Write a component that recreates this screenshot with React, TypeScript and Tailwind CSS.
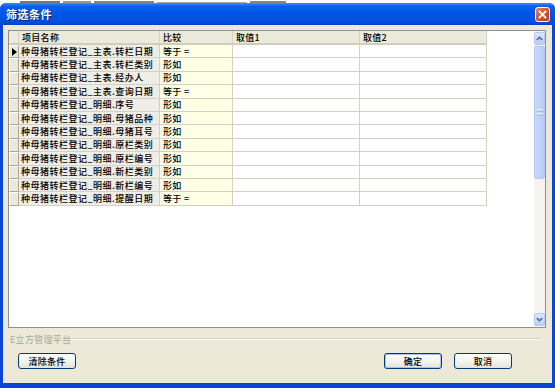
const rows = [
  { name: "种母猪转栏登记_主表.转栏日期", op: "等于 =" },
  { name: "种母猪转栏登记_主表.转栏类别", op: "形如" },
  { name: "种母猪转栏登记_主表.经办人", op: "形如" },
  { name: "种母猪转栏登记_主表.查询日期", op: "等于 =" },
  { name: "种母猪转栏登记_明细.序号", op: "形如" },
  { name: "种母猪转栏登记_明细.母猪品种", op: "形如" },
  { name: "种母猪转栏登记_明细.母猪耳号", op: "形如" },
  { name: "种母猪转栏登记_明细.原栏类别", op: "形如" },
  { name: "种母猪转栏登记_明细.原栏编号", op: "形如" },
  { name: "种母猪转栏登记_明细.新栏类别", op: "形如" },
  { name: "种母猪转栏登记_明细.新栏编号", op: "形如" },
  { name: "种母猪转栏登记_明细.提醒日期", op: "等于 =" },
];

const XpButton = ({ label, primary }: { label: string; primary?: boolean }) => (
  <button
    className={`w-[58px] h-[16px] rounded-[3px] border border-[#003C74] bg-gradient-to-b from-white via-[#f4f4f0] to-[#e3e2da] text-[9px] leading-none font-medium tracking-[0.3px] text-black flex items-center justify-center ${
      primary ? "shadow-[inset_0_0_0_1px_#a9c3f0]" : ""
    }`}
  >
    {label}
  </button>
);

const HeaderCell = ({ label, w }: { label: string; w: string }) => (
  <div
    className={`${w} h-full flex items-center pl-[3px] border-r border-[#d6d2c2] border-b-2 border-b-[#d1cdbd] bg-[#ebeadb] text-[9px] leading-none font-medium tracking-[0.3px]`}
  >
    {label}
  </div>
);

export default function App() {
  return (
    <div className="w-[555px] h-[388px] flex flex-col bg-white font-['Noto_Sans_CJK_SC',sans-serif] text-black overflow-hidden">
      {/* leftover of the window behind */}
      <div className="h-[3px] flex gap-[3px] px-[20px] items-end bg-white">
        <div className="w-[40px] h-[2px] bg-[#777]" />
        <div className="w-[28px] h-[2px] bg-[#999]" />
        <div className="w-[60px] h-[2px] bg-[#888]" />
        <div className="w-[90px] h-[1px] bg-[#aaa]" />
        <div className="w-[36px] h-[2px] bg-[#888]" />
      </div>

      {/* window frame */}
      <div className="flex-1 flex flex-col rounded-t-[6px] bg-[#0a45d6]">
        {/* title bar */}
        <div className="h-[22px] flex items-center justify-between pl-[6px] pr-[5px] rounded-t-[6px] bg-[linear-gradient(to_bottom,#3d8ff8_0%,#0b61ea_14%,#0055e5_45%,#0052e0_80%,#0042cb_100%)]">
          <span className="text-white font-bold text-[11px] leading-none tracking-[0.5px] [text-shadow:1px_1px_0_#0a1f6e]">
            筛选条件
          </span>
          <div className="w-[15px] h-[15px] rounded-[3px] border border-white bg-gradient-to-br from-[#e8825f] via-[#d9502a] to-[#c23a14] flex items-center justify-center">
            <svg width="9" height="9" viewBox="0 0 9 9">
              <path d="M1.5 1.5 L7.5 7.5 M7.5 1.5 L1.5 7.5" stroke="white" strokeWidth="1.8" strokeLinecap="square" />
            </svg>
          </div>
        </div>

        {/* client area */}
        <div className="flex-1 mx-[3px] mb-[5px] bg-[#ece9d8] flex flex-col">
          {/* grid panel */}
          <div className="mt-[5px] ml-[5px] mr-[6px] h-[298px] border border-[#8e8f8f] bg-white flex">
            <div className="flex-1 flex flex-col">
              <div className="h-[14px] flex">
                <div className="w-[10px] h-full bg-[#ebeadb] border-r border-[#d6d2c2] border-b-2 border-b-[#d1cdbd]" />
                <HeaderCell label="项目名称" w="w-[141px]" />
                <HeaderCell label="比较" w="w-[73px]" />
                <HeaderCell label="取值1" w="w-[127px]" />
                <HeaderCell label="取值2" w="w-[127px]" />
              </div>
              {rows.map((r, i) => (
                <div key={i} className="h-[13.4px] flex text-[9px] leading-none font-medium">
                  <div className="w-[10px] h-full bg-[#ece9d8] border-t border-l border-t-white border-l-white border-b border-r border-b-[#aca899] border-r-[#aca899] flex items-center justify-center">
                    {i === 0 && (
                      <svg width="5" height="8" viewBox="0 0 5 8">
                        <path d="M0 0 L5 4 L0 8 Z" fill="black" />
                      </svg>
                    )}
                  </div>
                  <div className="w-[141px] h-full bg-[#eeede6] border-r border-b border-[#d4d0c8] flex items-center pl-[2px] whitespace-nowrap tracking-[0.5px]">
                    {r.name}
                  </div>
                  <div className="w-[73px] h-full bg-[#ffffe6] border-r border-b border-[#d4d0c8] flex items-center pl-[3px] whitespace-pre tracking-[0.3px]">
                    {r.op}
                  </div>
                  <div className="w-[127px] h-full bg-white border-r border-b border-[#d4d0c8]" />
                  <div className="w-[127px] h-full bg-white border-r border-b border-[#d4d0c8]" />
                </div>
              ))}
            </div>

            {/* vertical scrollbar */}
            <div className="w-[12px] flex flex-col bg-[#f5f4ef] border-l border-[#fdfdfb] pt-[1px] pb-[1px]">
              <div className="h-[13px] rounded-[2px] border border-[#b6c9f4] bg-gradient-to-b from-[#dce8fd] to-[#b9cffa] flex items-center justify-center">
                <svg width="7" height="5" viewBox="0 0 7 5">
                  <path d="M0.8 4 L3.5 1.2 L6.2 4" stroke="#4d6185" strokeWidth="1.4" fill="none" />
                </svg>
              </div>
              <div className="mt-[1px] h-[133px] rounded-[2px] border border-[#b2c7f3] bg-gradient-to-r from-[#c9daff] via-[#c2d4fc] to-[#b6cbf8] flex items-center justify-center">
                <div className="flex flex-col gap-[1px]">
                  <div className="w-[6px] h-[1px] bg-[#eef3ff]" />
                  <div className="w-[6px] h-[1px] bg-[#a5bdee]" />
                  <div className="w-[6px] h-[1px] bg-[#eef3ff]" />
                  <div className="w-[6px] h-[1px] bg-[#a5bdee]" />
                </div>
              </div>
              <div className="flex-1" />
              <div className="h-[13px] rounded-[2px] border border-[#b6c9f4] bg-gradient-to-b from-[#dce8fd] to-[#b9cffa] flex items-center justify-center">
                <svg width="7" height="5" viewBox="0 0 7 5">
                  <path d="M0.8 1 L3.5 3.8 L6.2 1" stroke="#4d6185" strokeWidth="1.4" fill="none" />
                </svg>
              </div>
            </div>
          </div>

          {/* group box caption */}
          <div className="mt-[5px] h-[12px] ml-[7px] mr-[11px] flex items-center gap-[1px]">
            <span className="text-[9px] leading-none text-[#a9a898] tracking-[0.3px]">E立方管理平台</span>
            <div className="flex-1 flex flex-col">
              <div className="h-[1px] bg-[#d0d0bf]" />
              <div className="h-[1px] bg-white" />
            </div>
          </div>

          {/* buttons */}
          <div className="mt-[8px] pl-[15px] pr-[40px] flex items-center">
            <XpButton label="清除条件" />
            <div className="flex-1" />
            <XpButton label="确定" primary />
            <div className="w-[12px]" />
            <XpButton label="取消" />
          </div>
        </div>
      </div>
    </div>
  );
}
